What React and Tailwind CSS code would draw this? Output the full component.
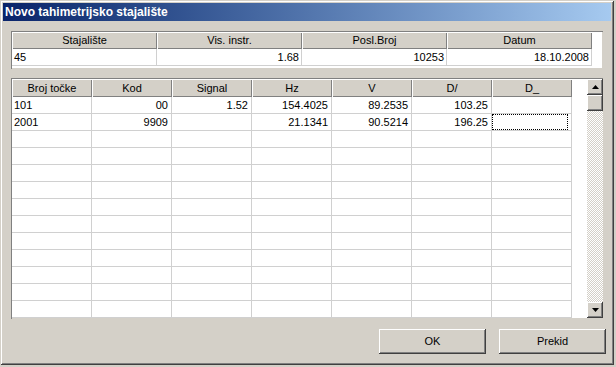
import React from "react";

const font = { fontFamily: '"Liberation Sans", Arial, sans-serif' };

const raised =
  "shadow-[inset_-1px_-1px_0_#404040,inset_1px_1px_0_#ffffff,inset_-2px_-2px_0_#808080]";

function Tri({ up }) {
  return (
    <svg width="7" height="4" viewBox="0 0 7 4">
      {up ? <polygon points="3.5,0 7,4 0,4" fill="#000" /> : <polygon points="0,0 7,0 3.5,4" fill="#000" />}
    </svg>
  );
}

const cols = ["Broj točke", "Kod", "Signal", "Hz", "V", "D/", "D_"];
const rows = [
  ["101", "00", "1.52", "154.4025", "89.2535", "103.25", ""],
  ["2001", "9909", "", "21.1341", "90.5214", "196.25", ""],
];

export default function App() {
  const allRows = [...rows];
  while (allRows.length < 13) allRows.push(["", "", "", "", "", "", ""]);
  return (
    <div className="w-[616px] h-[367px] bg-[#d4d0c8] overflow-hidden text-[11px] text-black" style={font}>
      <div className="w-[614px] h-[365px] flex flex-col shadow-[inset_1px_1px_0_#d4d0c8,inset_-1px_-1px_0_#404040,inset_2px_2px_0_#ffffff,inset_-2px_-2px_0_#808080]">
        {/* title bar */}
        <div className="mt-[3px] mx-[3px] h-[18px] flex items-center pl-[2px] bg-gradient-to-r from-[#0a246a] to-[#a6caf0]">
          <span className="text-white font-bold text-[12px] leading-none">Novo tahimetrijsko stajalište</span>
        </div>

        {/* top table */}
        <div className="mt-[10px] ml-[11px] w-[592px] h-[38px] bg-white border-t border-l border-[#808080] shadow-[inset_-1px_-1px_0_#d4d0c8]">
          <div className="flex h-[17px]">
            {["Stajalište", "Vis. instr.", "Posl.Broj", "Datum"].map((h) => (
              <div key={h} className={"w-[145px] bg-[#d4d0c8] flex items-center justify-center leading-none shadow-[inset_1px_1px_0_#ffffff,inset_-1px_-1px_0_#808080]"}>
                {h}
              </div>
            ))}
          </div>
          <div className="flex h-[17px]">
            {["45", "1.68", "10253", "18.10.2008"].map((v, i) => (
              <div
                key={i}
                className={
                  "w-[145px] flex items-center px-[2px] leading-none border-r border-b border-[#d0d0d0] " +
                  (i === 0 ? "justify-start" : "justify-end")
                }
              >
                {v}
              </div>
            ))}
          </div>
        </div>

        {/* bottom grid */}
        <div className="mt-[9px] ml-[11px] w-[592px] h-[241px] bg-white border-t border-l border-[#808080] shadow-[inset_-1px_-1px_0_#d4d0c8] flex overflow-hidden">
          <div className="w-[575px] flex flex-col overflow-hidden">
            <div className="flex h-[18px] shrink-0">
              {cols.map((h) => (
                <div key={h} className="w-[80px] shrink-0 bg-[#d4d0c8] flex items-center justify-center leading-none shadow-[inset_1px_1px_0_#ffffff,inset_-1px_-1px_0_#808080]">
                  {h}
                </div>
              ))}
            </div>
            {allRows.map((r, ri) => (
              <div key={ri} className="flex h-[17px] shrink-0">
                {r.map((v, ci) => (
                  <div
                    key={ci}
                    className={
                      "w-[80px] shrink-0 flex items-center leading-none border-r border-b border-[#d0d0d0] " +
                      (ci === 0 ? "justify-start pl-[2px]" : "justify-end pr-[3px]")
                    }
                  >
                    {ri === 1 && ci === 6 ? (
                      <div className="w-full h-full border border-dotted border-black" />
                    ) : (
                      v
                    )}
                  </div>
                ))}
              </div>
            ))}
          </div>
          <div className="w-[16px] h-[239px] flex flex-col">
            <div className={"h-[16px] bg-[#d4d0c8] flex items-center justify-center " + raised}>
              <Tri up />
            </div>
            <div className={"h-[16px] bg-[#d4d0c8] " + raised} />
            <div className="flex-1 bg-[repeating-conic-gradient(#d4d0c8_0_25%,#ffffff_0_50%)] bg-size-[2px_2px]" />
            <div className={"h-[16px] bg-[#d4d0c8] flex items-center justify-center " + raised}>
              <Tri />
            </div>
          </div>
        </div>

        {/* buttons */}
        <div className="mt-[10px] flex pl-[379px] gap-[13px]">
          <div className={"w-[107px] h-[25px] bg-[#d4d0c8] flex items-center justify-center " + raised}>OK</div>
          <div className={"w-[107px] h-[25px] bg-[#d4d0c8] flex items-center justify-center " + raised}>Prekid</div>
        </div>
      </div>
    </div>
  );
}
